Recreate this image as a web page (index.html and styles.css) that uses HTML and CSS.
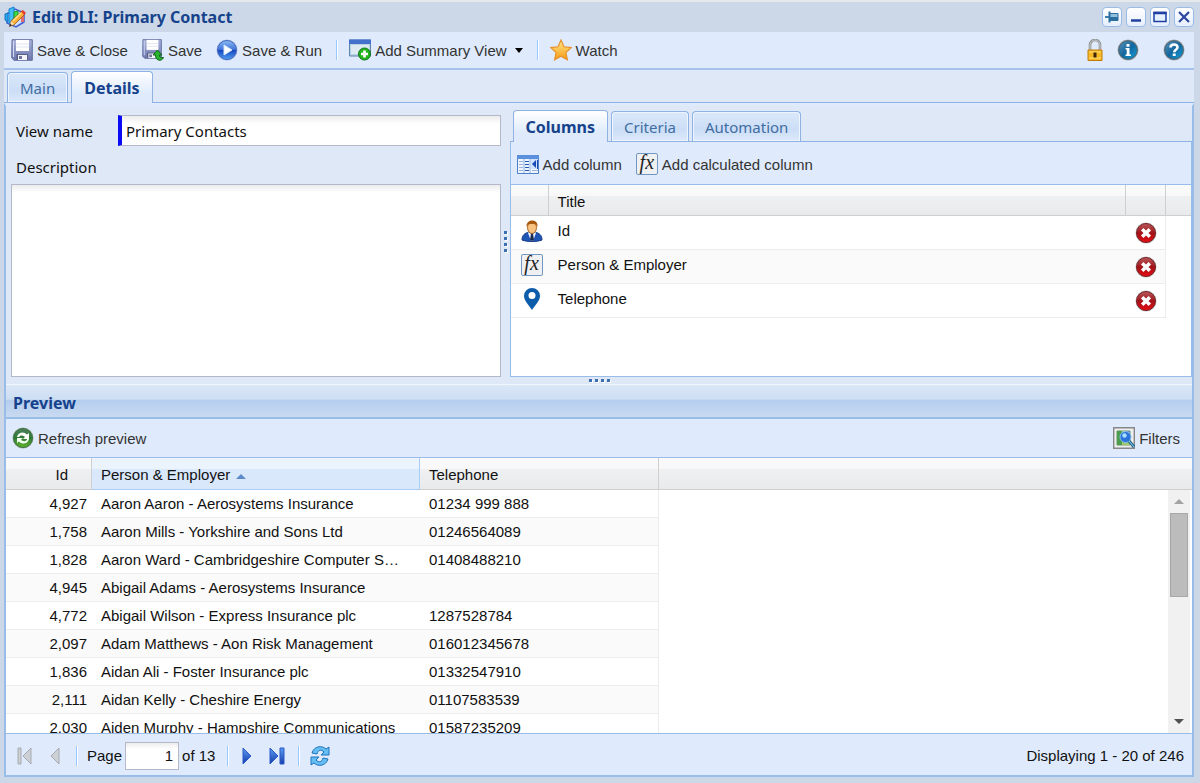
FILE: index.html
```html
<!DOCTYPE html>
<html lang="en">
<head>
<meta charset="UTF-8" />
<meta name="viewport" content="width=device-width, initial-scale=1" />
<title>Edit DLI: Primary Contact</title>
<link rel="stylesheet" href="styles.css">
</head>
<body>

<svg class="defs" aria-hidden="true">
  <defs>
    <linearGradient id="steel" x1="0" y1="0" x2="0" y2="1"><stop offset="0" stop-color="#a9b3dc"/><stop offset="1" stop-color="#6c78ac"/></linearGradient>
    <linearGradient id="gloss" x1="0" y1="0" x2="0" y2="1"><stop offset="0" stop-color="#8bbcf5"/><stop offset=".48" stop-color="#3f72d8"/><stop offset=".52" stop-color="#1747bd"/><stop offset="1" stop-color="#4fa0f5"/></linearGradient>
    <linearGradient id="teal" x1="0" y1="0" x2="1" y2="1"><stop offset="0" stop-color="#5d93b5"/><stop offset=".5" stop-color="#12679f"/><stop offset="1" stop-color="#13a0dd"/></linearGradient>
    <linearGradient id="gold" x1="0" y1="0" x2="0" y2="1"><stop offset="0" stop-color="#ffe98a"/><stop offset="1" stop-color="#f79a13"/></linearGradient>
    <linearGradient id="red" x1="0" y1="0" x2="0" y2="1"><stop offset="0" stop-color="#b85a5c"/><stop offset=".5" stop-color="#a01319"/><stop offset="1" stop-color="#e90c12"/></linearGradient>
    <linearGradient id="green" x1="0" y1="0" x2="0" y2="1"><stop offset="0" stop-color="#4f7f5a"/><stop offset=".5" stop-color="#2d7a33"/><stop offset="1" stop-color="#63b52c"/></linearGradient>
    <linearGradient id="navy" x1="0" y1="0" x2="0" y2="1"><stop offset="0" stop-color="#5c9cf0"/><stop offset="1" stop-color="#163cab"/></linearGradient>
    <symbol id="i-floppy" viewBox="0 0 22 22">
      <path d="M1 .7h20.300v20.600H3L.7 19z" fill="url(#steel)" stroke="#6570a0"/>
      <path d="M5 1h13v11H5z" fill="#fff"/><path d="M5 5h13M5 8h13" stroke="#e0e5f2"/>
      <path d="M5.500 15H17v6H5.500z" fill="#5c6285"/><path d="M7 16h9v5H7z" fill="#f4f5fa"/><path d="M8 17h3v3H8z" fill="#70779a"/>
      <path d="M2.500 2v16" stroke="#d3d9f2"/>
    </symbol>
    <symbol id="i-delete" viewBox="0 0 22 22">
      <circle cx="11" cy="11" r="10.500" fill="#b9c0be"/><circle cx="11" cy="11" r="9.500" fill="url(#red)" stroke="#7c2226"/>
      <path d="M7.200 7.200l7.600 7.600M14.800 7.200l-7.600 7.600" stroke="#fff" stroke-width="3.500"/>
    </symbol>
  </defs>
</svg>

<div class="window">
  <header class="titlebar">
    <svg class="icon" viewBox="0 0 22 22">
      <path d="M3 8l8-5 9 4v9l-8 5-9-4z" fill="#cfe0ff" stroke="#3b5fd0" stroke-width="1.500"/>
      <path d="M1 8l3-1v9l-3-2z" fill="#27a5ea" stroke="#1775c4"/><path d="M5 3l5-2v15l-5 1z" fill="#43bdf5" stroke="#1482cf"/><path d="M10 6l4-1v10l-4 1z" fill="#3ddc45" stroke="#1c9b2c"/><path d="M17 8h3v8h-3z" fill="#e06a6f"/>
      <path d="M6 20l1-5L18 5l3 3-11 11z" fill="#ffae35" stroke="#8a4a18" stroke-width=".7"/><path d="M17 5l2-1 3 3-2 2z" fill="#e23b31"/><path d="M7 15l3 3-4 2z" fill="#f7dfb4"/><path d="M6 18l2 1-3 2z" fill="#222"/><path d="M9 15l8-8" stroke="#ffe48c" stroke-width="1.500"/>
    </svg>
    <h1>Edit DLI: Primary Contact</h1>
    <div class="tools">
      <button aria-label="Pin"><svg viewBox="0 0 16 16"><path d="M1 8h5" stroke="#3d7fae" stroke-width="2"/><path d="M5.500 2.500v11" stroke="#2b6f9f" stroke-width="2"/><path d="M6 4.500h8v7H6z" fill="#8fc0dd" stroke="#2b6f9f"/><path d="M6 9.500h8" stroke="#2b6f9f" stroke-width="3"/></svg></button>
      <button aria-label="Minimize"><svg viewBox="0 0 16 16"><path d="M3 11.500h10" stroke="#23429f" stroke-width="2.500"/></svg></button>
      <button aria-label="Maximize"><svg viewBox="0 0 16 16"><path d="M2 3.500h12v9H2z" fill="#e4efff" stroke="#1d3fa3" stroke-width="1.500"/><path d="M1.500 4h13" stroke="#1d3fa3" stroke-width="2.500"/></svg></button>
      <button aria-label="Close"><svg viewBox="0 0 16 16"><path d="M3 3l10 10M13 3L3 13" stroke="#2b459e" stroke-width="2.200"/></svg></button>
    </div>
  </header>

  <div class="panel">
    <div class="toolbar main-toolbar">
      <button class="btn"><svg class="icon"><use href="#i-floppy"/></svg>Save &amp; Close</button>
      <button class="btn">
        <svg class="icon" viewBox="0 0 22 22"><use href="#i-floppy" width="20" height="20"/><path d="M11 16l4.500-5 4.500 5h-2.500c0 2 1 3 4 2.500-1 2.500-3 3-5 2.500s-3-2-3-5z" fill="#28b52c" stroke="#106318"/></svg>
        Save
      </button>
      <button class="btn">
        <svg class="icon" viewBox="0 0 22 22"><circle cx="11" cy="11" r="10.500" fill="#a6bde9"/><circle cx="11" cy="11" r="9.500" fill="url(#gloss)" stroke="#4667b8"/><path d="M8 6l8 5-8 5z" fill="#fff" stroke="#d4e5ff"/></svg>
        Save &amp; Run
      </button>
      <span class="sep"></span>
      <button class="btn">
        <svg class="icon" viewBox="0 0 22 22"><path d="M.5 1h21v16H.5z" fill="#b7d2e0" stroke="#5f84ae"/><path d="M2 6h18v9H2z" fill="#dcebf1"/><path d="M0 .5h22V5H0z" fill="#4272cb"/><circle cx="15.500" cy="15" r="6" fill="#25b51e" stroke="#0b7318"/><path d="M15.500 11.500v7M12 15h7" stroke="#fff" stroke-width="2.600"/></svg>
        Add Summary View
        <svg class="caret" viewBox="0 0 8 5"><path d="M0 0h8L4 5z"/></svg>
      </button>
      <span class="sep"></span>
      <button class="btn">
        <svg class="icon" viewBox="0 0 22 22"><path d="M11 1l3 6.800 7.200.8-5.300 5 1.500 7.200L11 17.300l-6.400 3.500 1.500-7.200-5.300-5L8 7.800z" fill="url(#gold)" stroke="#e7902c" stroke-width="1.200"/></svg>
        Watch
      </button>
      <span class="fill"></span>
      <button class="btn" aria-label="Lock">
        <svg class="icon lock" viewBox="3 0 16 22"><path d="M6 11V6a5 5 0 0 1 10 0v5" fill="none" stroke="#8c8f90" stroke-width="2.600"/><path d="M6 11V6a5 5 0 0 1 10 0v5" fill="none" stroke="#c9cccd"/><path d="M4 11h14v10.500H4z" fill="#f6b823" stroke="#c27c0c"/><path d="M5 13h12M5 19h12" stroke="#ffe17c"/><path d="M9.500 13.500h3v5h-3z" fill="#3c2603"/></svg>
      </button>
      <button class="btn" aria-label="Information">
        <svg class="icon" viewBox="0 0 22 22"><circle cx="11" cy="11" r="10.500" fill="#a4a9ad"/><circle cx="11" cy="11" r="9.300" fill="url(#teal)" stroke="#49616f"/><path d="M9.500 5h3v2.700h-3zM8.500 9h4v6.500H14V17H8.500v-1.500h1.200v-5H8.500z" fill="#fff"/></svg>
      </button>
      <button class="btn help" aria-label="Help">
        <svg class="icon" viewBox="0 0 22 22"><circle cx="11" cy="11" r="10.500" fill="#a4a9ad"/><circle cx="11" cy="11" r="9.300" fill="url(#teal)" stroke="#49616f"/><path d="M7.500 8.500c0-4 7-4 7-.3 0 2.600-3.300 2.400-3.300 5" fill="none" stroke="#fff" stroke-width="2.600"/><path d="M9.700 14.500h3V17h-3z" fill="#fff"/></svg>
      </button>
    </div>

    <nav class="tabs main-tabs">
      <button class="tab">Main</button>
      <button class="tab active">Details</button>
    </nav>

    <main class="content">
      <div class="details">
        <form class="view-form">
          <div class="field">
            <label for="view-name">View name</label>
            <input id="view-name" type="text" value="Primary Contacts">
          </div>
          <label class="description-label" for="description">Description</label>
          <textarea id="description"></textarea>
        </form>

        <div class="split-v"><i></i><i></i><i></i><i></i></div>

        <section class="columns">
          <nav class="tabs">
            <button class="tab active">Columns</button>
            <button class="tab">Criteria</button>
            <button class="tab">Automation</button>
          </nav>
          <div class="columns-body">
            <div class="toolbar">
              <button class="btn">
                <svg class="icon" viewBox="0 0 22 22"><path d="M.5 2.500h21v18H.5z" fill="#eef5ff" stroke="#4c80c8"/><path d="M0 2h22v4H0z" fill="#5b91dc"/><path d="M7 6v14M13 6v14" stroke="#8db1e5"/><path d="M2 8.500h4M2 11.500h4M2 14.500h4M2 17.500h4M15 17.500h6" stroke="#9fb4d5"/><path d="M8 8.500h4M8 11.500h4M8 14.500h4M8 17.500h4" stroke="#245ab4"/><path d="M14 6h7v10h-7z" fill="#cfe2ff"/><path d="M19 7v8l-4-4z" fill="#1549b4"/><path d="M20.500 7v9" stroke="#1549b4"/></svg>
                Add column
              </button>
              <button class="btn"><span class="fx">fx</span>Add calculated column</button>
            </div>
            <div class="columns-grid">
              <table class="grid">
                <colgroup><col class="c-icon"><col><col class="c-delete"><col class="c-gutter"></colgroup>
                <thead>
                  <tr><th></th><th>Title</th><th></th><th></th></tr>
                </thead>
                <tbody>
                  <tr>
                    <td><svg class="icon" viewBox="0 0 22 22"><path d="M1 20c0-5 3-7 7-8h6c4 1 7 3 7 8-5 2-15 2-20 0z" fill="#1f56b5" stroke="#173f86"/><path d="M8 12l3 3 3-3 1 1-3 8h-2l-3-8z" fill="#e8f2ff"/><path d="M10 14h2l1 6-2 1-2-1z" fill="#1a2a50"/><ellipse cx="11" cy="7.500" rx="4.500" ry="6" fill="#f8c381" stroke="#a7641f"/><path d="M5.500 7c-1-8 12-9 11 0-1-3-3-3-6-3-2 0-4 0-5 3z" fill="#a8590f"/></svg></td>
                    <td>Id</td>
                    <td><button class="delete" aria-label="Delete Id"><svg class="icon"><use href="#i-delete"/></svg></button></td>
                    <td></td>
                  </tr>
                  <tr>
                    <td><span class="fx">fx</span></td>
                    <td>Person &amp; Employer</td>
                    <td><button class="delete" aria-label="Delete Person &amp; Employer"><svg class="icon"><use href="#i-delete"/></svg></button></td>
                    <td></td>
                  </tr>
                  <tr>
                    <td><svg class="icon" viewBox="0 0 22 22"><path d="M11 0a8 8 0 0 1 8 8c0 5-5 9-8 14C8 17 3 13 3 8a8 8 0 0 1 8-8z" fill="#0c5cab"/><circle cx="11" cy="7.500" r="3.500" fill="#fff"/></svg></td>
                    <td>Telephone</td>
                    <td><button class="delete" aria-label="Delete Telephone"><svg class="icon"><use href="#i-delete"/></svg></button></td>
                    <td></td>
                  </tr>
                </tbody>
              </table>
            </div>
          </div>
        </section>
      </div>

      <div class="split-h"><i></i><i></i><i></i><i></i></div>

      <section class="preview">
        <h2>Preview</h2>
        <div class="toolbar">
          <button class="btn">
            <svg class="icon" viewBox="0 0 22 22"><circle cx="11" cy="11" r="10.500" fill="#a2b5a4"/><circle cx="11" cy="11" r="9.500" fill="url(#green)" stroke="#3b7044"/><path d="M5 10c1-5 7-6 10-2.500l2-1.500v6h-6l2-2C11 8 7 8 7.500 10z" fill="#fff"/><path d="M17 12c-1 5-7 6-10 2.500L5 16v-5h6l-2 1.700c2 2.200 6 1.800 6-.7z" fill="#f3fff0"/></svg>
            Refresh preview
          </button>
          <span class="fill"></span>
          <button class="btn">
            <svg class="icon" viewBox="0 0 22 22"><path d="M.7.700h20.600v20.600H.7z" fill="#eee" stroke="#858789" stroke-width="1.400"/><path d="M4 4h13v14H4z" fill="#fff" stroke="#6e9567"/><path d="M4 4h5v14H4z" fill="#4d9d50"/><path d="M9 12h8v6H9z" fill="#9fc870"/><path d="M13 4h4v4h-4z" fill="#6b8fb9"/><circle cx="12.500" cy="10" r="5.500" fill="#2d74da" stroke="#83bdf0"/><circle cx="11.500" cy="8.500" r="2.200" fill="#a8e2ff"/><path d="M16 14l5 6" stroke="#20648c" stroke-width="3"/><path d="M16 14l5 6" stroke="#91d3ea"/></svg>
            Filters
          </button>
        </div>
        <div class="preview-grid">
          <div class="preview-rows">
            <table class="grid">
              <colgroup><col class="c-id"><col class="c-person"><col class="c-phone"><col></colgroup>
              <thead>
                <tr>
                  <th>Id</th>
                  <th class="sorted">Person &amp; Employer <svg class="sort" viewBox="0 0 10 5"><path d="M0 5h10L5 0z"/></svg></th>
                  <th>Telephone</th>
                  <th></th>
                </tr>
              </thead>
              <tbody>
                <tr><td>4,927</td><td>Aaron Aaron - Aerosystems Insurance</td><td>01234 999 888</td><td></td></tr>
                <tr><td>1,758</td><td>Aaron Mills - Yorkshire and Sons Ltd</td><td>01246564089</td><td></td></tr>
                <tr><td>1,828</td><td>Aaron Ward - Cambridgeshire Computer Services</td><td>01408488210</td><td></td></tr>
                <tr><td>4,945</td><td>Abigail Adams - Aerosystems Insurance</td><td></td><td></td></tr>
                <tr><td>4,772</td><td>Abigail Wilson - Express Insurance plc</td><td>1287528784</td><td></td></tr>
                <tr><td>2,097</td><td>Adam Matthews - Aon Risk Management</td><td>016012345678</td><td></td></tr>
                <tr><td>1,836</td><td>Aidan Ali - Foster Insurance plc</td><td>01332547910</td><td></td></tr>
                <tr><td>2,111</td><td>Aidan Kelly - Cheshire Energy</td><td>01107583539</td><td></td></tr>
                <tr><td>2,030</td><td>Aiden Murphy - Hampshire Communications</td><td>01587235209</td><td></td></tr>
              </tbody>
            </table>
          </div>
          <div class="scrollbar">
            <svg class="arrow up" viewBox="0 0 10 5"><path d="M0 5h10L5 0z"/></svg>
            <div class="thumb"></div>
            <svg class="arrow" viewBox="0 0 10 5"><path d="M0 0h10L5 5z"/></svg>
          </div>
        </div>
        <div class="toolbar pager">
          <button class="btn" aria-label="First page" disabled><svg class="page-icon" viewBox="0 0 18 18"><path d="M2 1h3v16H2zM15 1v16L7 9z" fill="#cdd0d4" stroke="#a5a9ae"/></svg></button>
          <button class="btn" aria-label="Previous page" disabled><svg class="page-icon" viewBox="0 0 18 18"><path d="M13 1v16L5 9z" fill="#cdd0d4" stroke="#a5a9ae"/></svg></button>
          <span class="sep"></span>
          <div class="page-field">
            <label for="page">Page</label>
            <input id="page" type="text" value="1">
            <span>of 13</span>
          </div>
          <span class="sep"></span>
          <button class="btn" aria-label="Next page"><svg class="page-icon" viewBox="0 0 18 18"><path d="M5 1v16l8-8z" fill="url(#navy)" stroke="#2858c9"/></svg></button>
          <button class="btn" aria-label="Last page"><svg class="page-icon" viewBox="0 0 18 18"><path d="M2 1v16l8-8zM12 1h4v16h-4z" fill="url(#navy)" stroke="#2858c9"/></svg></button>
          <span class="sep"></span>
          <button class="btn" aria-label="Refresh">
            <svg class="icon" viewBox="0 0 22 22"><g fill="#66bdf2" stroke="#1e72bd" stroke-linejoin="round"><path d="M3 8c2-7 10-8 14-4l3-2v8h-8l3-3c-3-3-6-2-7 2z"/><path d="M19 14c-2 7-10 8-14 4l-3 2v-8h8l-3 3c3 3 6 2 7-2z"/></g></svg>
          </button>
          <span class="fill"></span>
          <span class="status">Displaying 1 - 20 of 246</span>
        </div>
      </section>
    </main>
  </div>
</div>

</body>
</html>
```

FILE: styles.css
```css
*, *::before, *::after {
  box-sizing: border-box;
}
body {
  margin: 0;
  font-family: "Liberation Sans", Arial, sans-serif;
  font-size: 15px;
  color: #111;
  background: #ccd8e7;
}
button, input, textarea {
  font: inherit;
  color: inherit;
}
button {
  margin: 0;
  padding: 0;
  border: 0;
  background: none;
  cursor: pointer;
}
svg {
  display: block;
}
.defs {
  position: absolute;
  width: 0;
  height: 0;
}
.icon {
  flex: none;
  width: 22px;
  height: 22px;
}
.icon.lock {
  width: 16px;
}
.fill {
  flex: 1;
}

/* Window */
.window {
  display: flex;
  flex-direction: column;
  height: 100vh;
  padding: 0 6px 6px 4px;
  border-top: 2px solid #e6e9ec;
}
.titlebar {
  display: flex;
  align-items: center;
  gap: 6px;
  flex: none;
  height: 30px;
}
.titlebar h1 {
  flex: 1;
  margin: 0;
  font: bold 16px/24px "Noto Sans", Tahoma, sans-serif;
  color: #15428b;
}
.tools {
  display: flex;
  gap: 4px;
}
.tools button {
  width: 20px;
  height: 20px;
  padding: 1px;
  border: 1px solid #99bbe8;
  border-radius: 4px;
  background: linear-gradient(#fff, #e4effd);
}
.tools svg {
  width: 16px;
  height: 16px;
}
.panel {
  display: flex;
  flex-direction: column;
  flex: 1;
  min-height: 0;
}

/* Toolbars */
.toolbar {
  display: flex;
  align-items: center;
  gap: 14px;
  flex: none;
  height: 40px;
  padding: 0 12px 0 6px;
  background: #dfebfc;
}
.main-toolbar {
  height: 38px;
  padding: 0 9px 0 7px;
  border-bottom: 2px solid #a5c3ec;
}
.btn {
  display: flex;
  align-items: center;
  gap: 4px;
  color: #333;
  white-space: nowrap;
}
.help {
  margin-left: 10px;
}
.caret {
  width: 8px;
  height: 5px;
  margin-left: 4px;
  fill: #000;
}
.sep {
  width: 2px;
  height: 20px;
  margin-right: -3px;
  border-left: 1px solid #98c8ff;
  border-right: 1px solid #fff;
}
.fx {
  width: 22px;
  height: 22px;
  border: 1px solid #7297c3;
  border-radius: 2px;
  background: #eef0f2;
  font: italic 20px/17px "Liberation Serif", serif;
  color: #222;
  text-align: center;
}

/* Tabs */
.tabs {
  display: flex;
  align-items: flex-end;
  gap: 3px;
  flex: none;
  height: 33px;
  padding-left: 3px;
  border-bottom: 1px solid #8db2e3;
  background: #dfe8f6;
}
.tab {
  height: 30px;
  padding: 0 12px;
  border: 1px solid #8db2e3;
  border-bottom: 0;
  border-radius: 4px 4px 0 0;
  background: linear-gradient(#dbe8fa, #cbdef6 60%, #dce9fa);
  box-shadow: inset 0 0 0 1px #eef5ff;
  font: 15px "Noto Sans", Tahoma, sans-serif;
  color: #416da3;
}
.tab.active {
  height: 32px;
  margin-bottom: -1px;
  background: linear-gradient(#fff, #dfebfc 70%);
  box-shadow: none;
  font-size: 16px;
  font-weight: bold;
  color: #15428b;
}

.content {
  display: flex;
  flex-direction: column;
  flex: 1;
  min-height: 0;
  border: 2px solid #99bce8;
  border-top: 3px solid #dfebfc;
  background: #dfe8f6;
}

/* View details */
.details {
  display: grid;
  grid-template-columns: minmax(0, 490fr) 9px minmax(0, 683fr);
  flex: none;
  padding-left: 5px;
}
.view-form {
  display: flex;
  flex-direction: column;
  padding-top: 9px;
  font-family: "Noto Sans", Tahoma, sans-serif;
}
.field {
  display: flex;
  align-items: center;
}
.field label {
  flex: none;
  width: 107px;
  padding-left: 5px;
}
.view-form input {
  flex: 1;
  min-width: 0;
  height: 31px;
  padding: 0 4px;
  border: 1px solid #b5b8c8;
  border-left: 4px solid #0a0af5;
  background: linear-gradient(#ececec, #fff 8px);
}
.description-label {
  padding: 4px 5px 0;
  line-height: 34px;
}
.view-form textarea {
  height: 193px;
  padding: 5px;
  border: 1px solid #b5b8c8;
  background: linear-gradient(#ececec, #fff 8px);
  resize: none;
}
.split-v, .split-h {
  display: flex;
  align-items: center;
  justify-content: center;
  gap: 3px;
}
.split-v {
  flex-direction: column;
}
.split-h {
  flex: none;
  height: 7px;
}
.split-v i, .split-h i {
  width: 3px;
  height: 3px;
  background: #3a6fb3;
  box-shadow: 1px 1px 0 #fff;
}

/* Columns */
.columns {
  display: flex;
  flex-direction: column;
}
.columns .tabs {
  height: 36px;
}
.columns-body {
  display: flex;
  flex-direction: column;
  flex: 1;
  border: 1px solid #99bce8;
  border-top: 0;
}
.columns .toolbar {
  height: 43px;
  padding-top: 2px;
  border-bottom: 1px solid #99bce8;
}
.columns-grid {
  flex: 1;
  background: #fff;
}

/* Grids */
.grid {
  width: 100%;
  table-layout: fixed;
  border-collapse: separate;
  border-spacing: 0;
}
.grid th {
  height: 31px;
  padding: 2px 9px 0;
  border-right: 1px solid #cfcfcf;
  border-bottom: 1px solid #cfcfcf;
  background: linear-gradient(#fafafa 0, #f8f8f8 35%, #eff0f1 36%, #e9eaeb);
  font-weight: normal;
  text-align: left;
  white-space: nowrap;
}
.grid td {
  padding: 0 9px;
  border-bottom: 1px solid #ededed;
  white-space: nowrap;
  overflow: hidden;
  text-overflow: ellipsis;
}
.grid tr:nth-child(even) td {
  background: #fafafa;
}
.grid td:nth-last-child(2) {
  border-right: 1px solid #ededed;
}
.grid th:last-child {
  border-right: 0;
}
.grid td:last-child, .grid tr:nth-child(even) td:last-child {
  border: 0;
  background: #fff;
}
.c-icon {
  width: 38px;
}
.c-delete {
  width: 40px;
}
.c-gutter {
  width: 25px;
}
.columns .grid td {
  height: 34px;
  padding-top: 6px;
  vertical-align: top;
}
.columns .grid td:first-child {
  padding: 4px 0 0 10px;
}
.columns .grid td:nth-child(3) {
  padding: 6px 0 0 9px;
}
.columns td .fx {
  display: block;
}
.delete {
  display: block;
}

/* Preview */
.preview {
  display: flex;
  flex-direction: column;
  flex: 1;
  min-height: 0;
}
.preview h2 {
  flex: none;
  height: 35px;
  margin: 0;
  padding: 0 7px;
  border-top: 1px solid #f2f7fd;
  border-bottom: 2px solid #99bce8;
  background: linear-gradient(#dae7f6, #cddef3 45%, #b4cdee 46%, #c9daf1);
  font: bold 16px/36px "Noto Sans", Tahoma, sans-serif;
  color: #15428b;
}
.preview .toolbar {
  height: 39px;
  border-bottom: 1px solid #99bce8;
}
.preview-grid {
  position: relative;
  flex: 1;
  min-height: 0;
  background: #fff;
}
.preview-rows {
  height: 100%;
  overflow: hidden;
}
.c-id {
  width: 86px;
}
.c-person {
  width: 328px;
}
.c-phone {
  width: 239px;
}
.preview .grid th {
  height: 32px;
}
.preview .grid td {
  height: 28px;
}
.preview .grid td:nth-child(2) {
  padding-right: 18px;
}
.preview .grid td:first-child {
  padding-right: 5px;
  text-align: right;
}
.preview .grid th:first-child {
  padding-right: 23px;
  text-align: right;
}
.grid th.sorted {
  border-color: #aaccf6;
  background: linear-gradient(#ebf3fd 35%, #d9e8fb 36%);
}
.sort {
  display: inline-block;
  width: 10px;
  height: 5px;
  margin-left: 2px;
  vertical-align: 1px;
  fill: #5c8bc9;
}
.scrollbar {
  position: absolute;
  top: 32px;
  right: 2px;
  bottom: 0;
  display: flex;
  flex-direction: column;
  align-items: center;
  width: 22px;
  padding: 9px 0;
  background: #f1f1f1;
}
.arrow {
  flex: none;
  width: 10px;
  height: 5px;
  fill: #505050;
}
.arrow.up {
  fill: #a3a3a3;
}
.thumb {
  width: 18px;
  height: 84px;
  margin: 9px 0 auto;
  border: 1px solid #a8a8a8;
  background: #bcbcbc;
}

/* Pager */
.preview .pager {
  gap: 12px;
  height: 42px;
  padding: 2px 8px 0 10px;
  border-top: 1px solid #99bce8;
  border-bottom: 0;
}
.page-icon {
  width: 18px;
  height: 18px;
}
.page-field {
  display: flex;
  align-items: center;
  gap: 3px;
}
.page-field input {
  width: 54px;
  height: 28px;
  padding: 0 5px;
  border: 1px solid #b5b8c8;
  background: linear-gradient(#ececec, #fff 6px);
  text-align: right;
}
```
